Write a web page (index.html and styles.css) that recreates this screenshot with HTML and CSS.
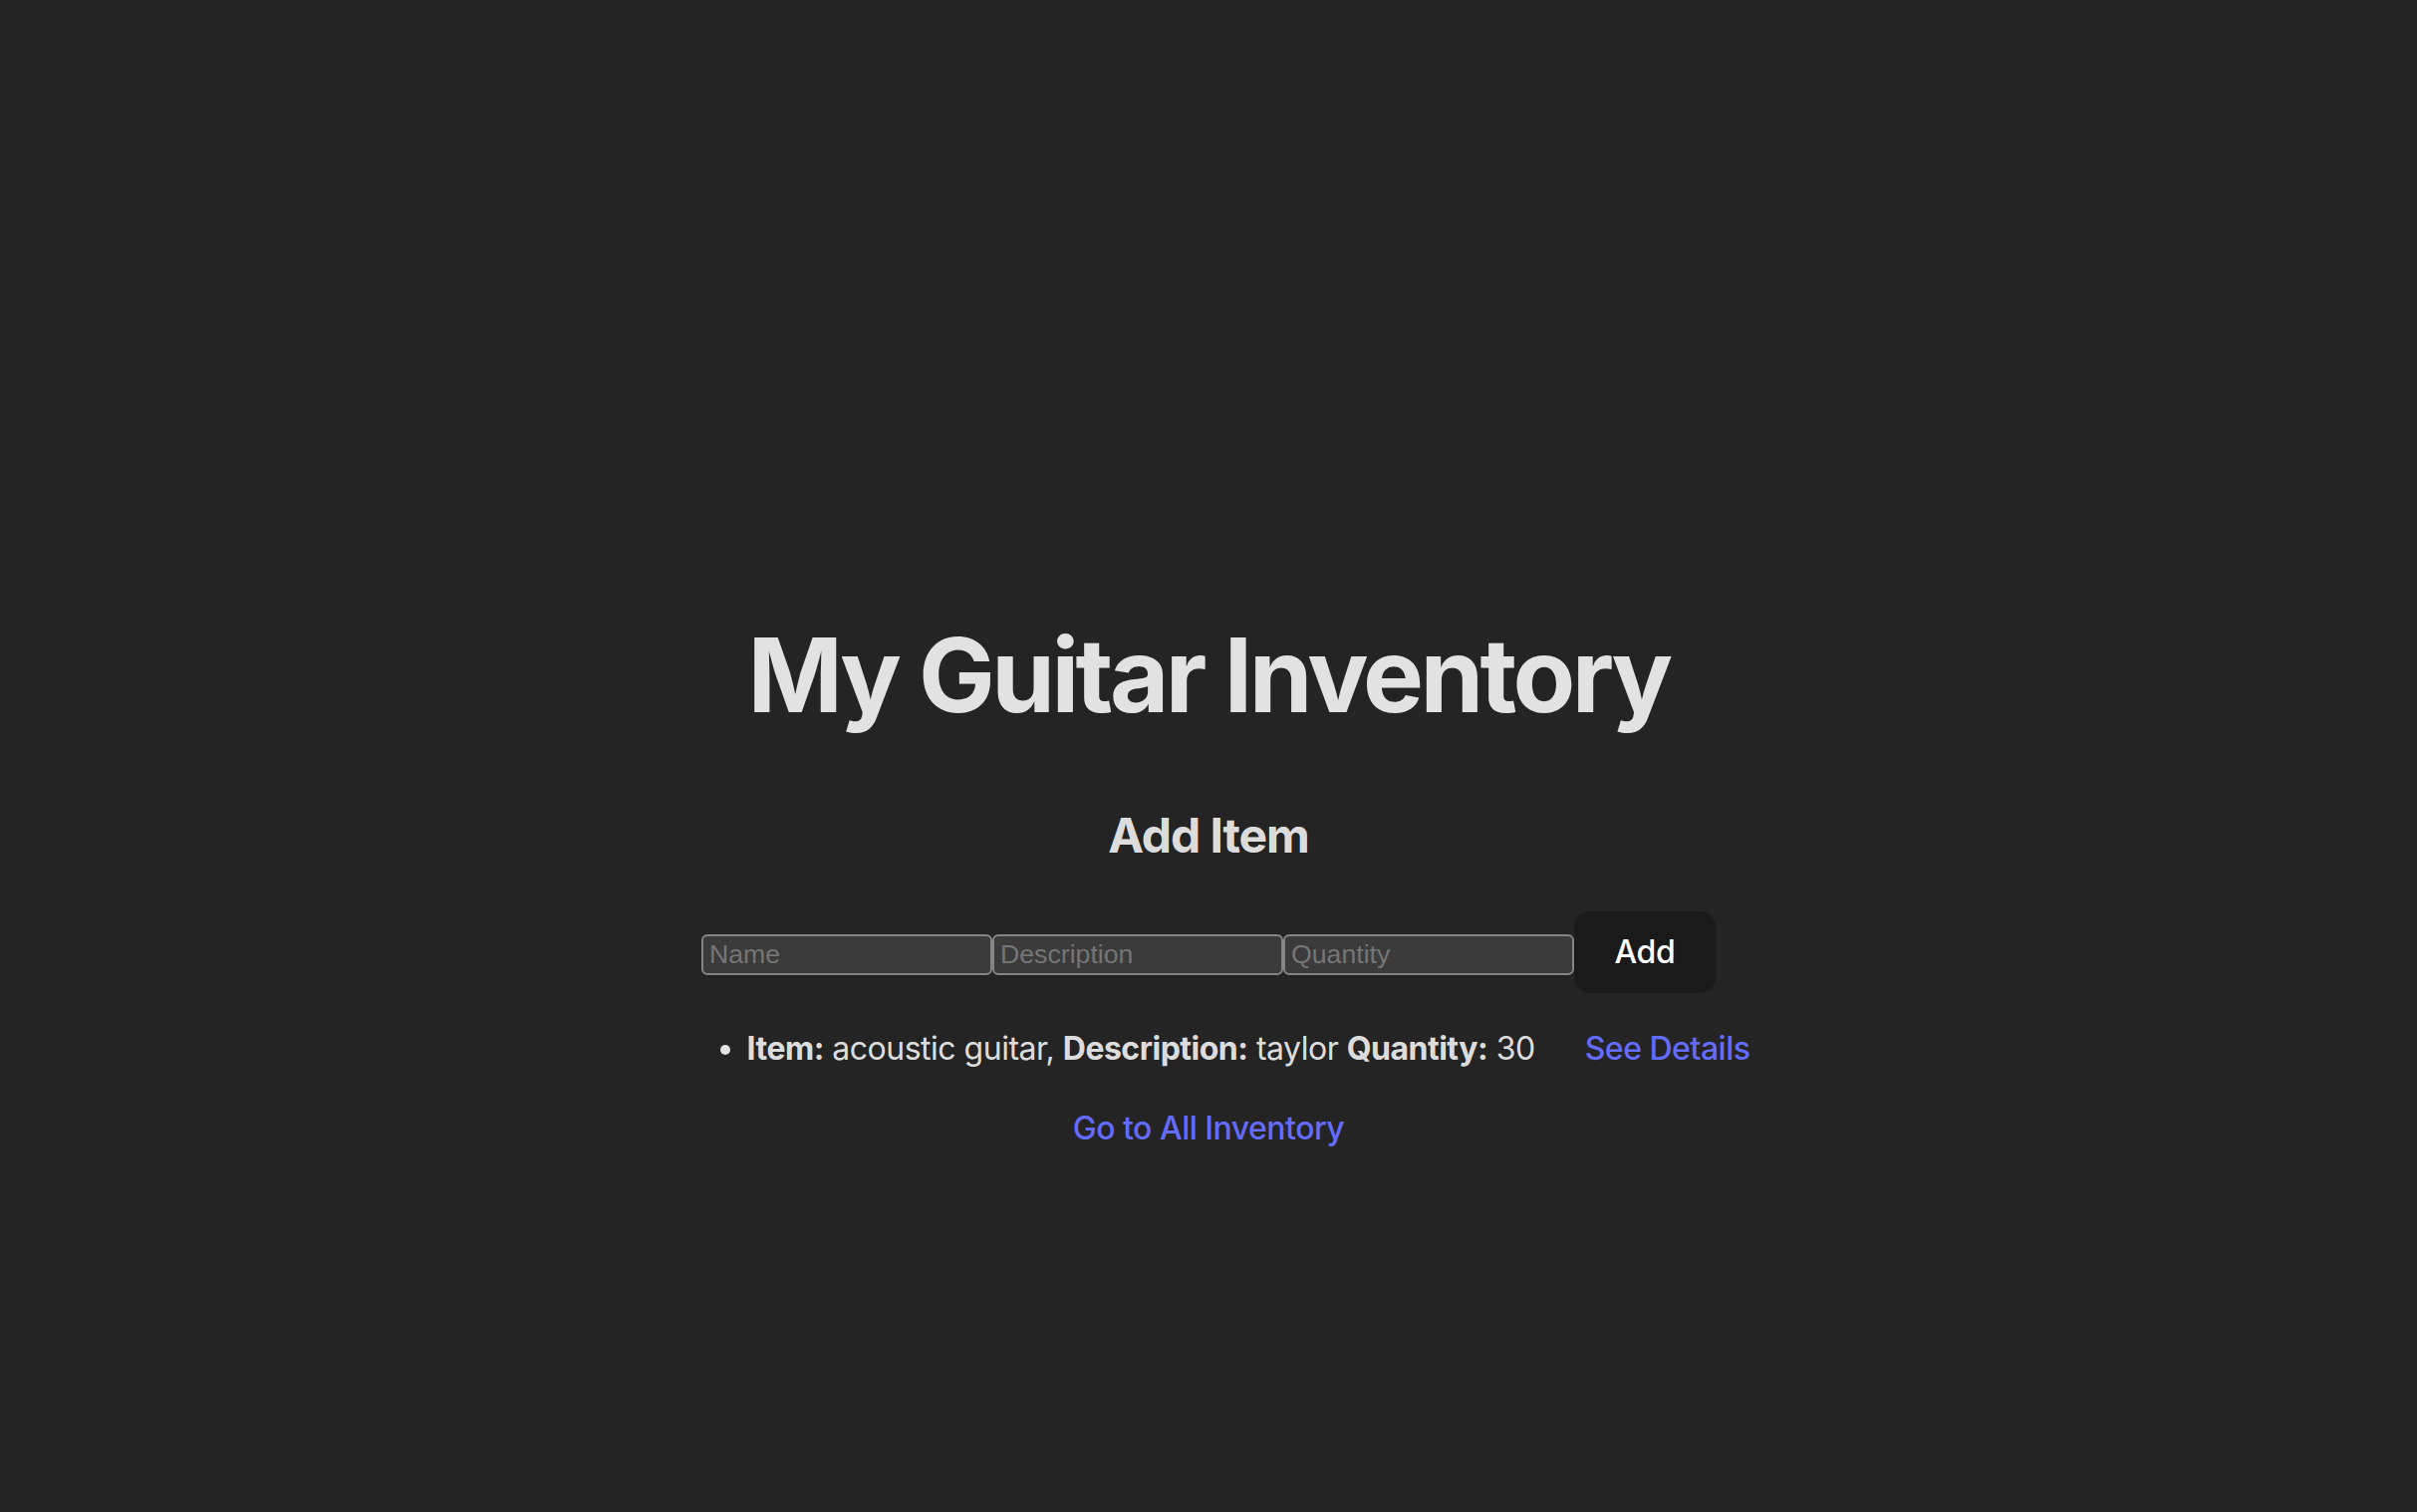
FILE: index.html
```html
<!DOCTYPE html>
<html lang="en">
<head>
<meta charset="UTF-8">
<title>My Guitar Inventory</title>
<link rel="stylesheet" href="styles.css">
</head>
<body>
<div class="root">
  <h1 class="title">My Guitar Inventory</h1>
  <h2 class="subtitle">Add Item</h2>
  <form class="add-form">
    <input class="field" type="text" placeholder="Name">
    <input class="field" type="text" placeholder="Description">
    <input class="field" type="number" placeholder="Quantity">
    <button class="add-btn" type="button">Add</button>
  </form>
  <ul class="items">
    <li class="item"><strong>Item:</strong> acoustic guitar, <strong>Description:</strong> taylor <strong>Quantity:</strong> 30<a class="link details" href="#">See Details</a></li>
  </ul>
  <div class="footer-link"><a class="link" href="#">Go to All Inventory</a></div>
</div>
</body>
</html>
```

FILE: styles.css
```css
:root {
  font-family: Inter, "Noto Sans", system-ui, sans-serif;
  font-size: 32px;
  line-height: 1.5;
  font-weight: 400;
  color: rgba(255, 255, 255, 0.87);
  background-color: #242424;
  -webkit-font-smoothing: antialiased;
}

body {
  margin: 0;
  display: flex;
  place-items: center;
  min-width: 640px;
  min-height: 100vh;
}

.root {
  max-width: 2560px;
  margin: 0 auto;
  padding: 256px 64px 64px;
  text-align: center;
  letter-spacing: -0.5px;
}

.title {
  font-size: 3.2em;
  line-height: 1.1;
  font-weight: 700;
  margin: 0.67em 0;
  letter-spacing: -3.6px;
}

.subtitle {
  font-size: 1.5em;
  font-weight: 700;
  margin: 0.83em 0;
  letter-spacing: -1.1px;
}

.add-form {
  display: flex;
  justify-content: center;
  align-items: baseline;
  margin: 0;
}

.field {
  box-sizing: border-box;
  width: 292px;
  height: 41px;
  padding: 2px 6px;
  font-family: "Liberation Sans", Arial, sans-serif;
  font-size: 26.67px;
  letter-spacing: 0;
  color: #e6e6e6;
  background: #3b3b3b;
  border: 2px solid #858585;
  border-radius: 6px;
  margin: 0;
}

.field::placeholder {
  color: #757575;
}

.field::-webkit-outer-spin-button,
.field::-webkit-inner-spin-button {
  -webkit-appearance: none;
  margin: 0;
}

.add-btn {
  border-radius: 16px;
  border: 2px solid transparent;
  padding: 0.6em 1.2em;
  font-size: 1em;
  font-weight: 500;
  font-family: inherit;
  line-height: normal;
  letter-spacing: -0.3px;
  background-color: #1a1a1a;
  color: #ffffff;
  cursor: pointer;
}

.items {
  margin: 1em 0;
  padding-left: 80px;
}

.item {
  text-align: center;
}

.link {
  font-weight: 500;
  color: #646cff;
  text-decoration: inherit;
}

.details {
  margin-left: 50px;
}
```
